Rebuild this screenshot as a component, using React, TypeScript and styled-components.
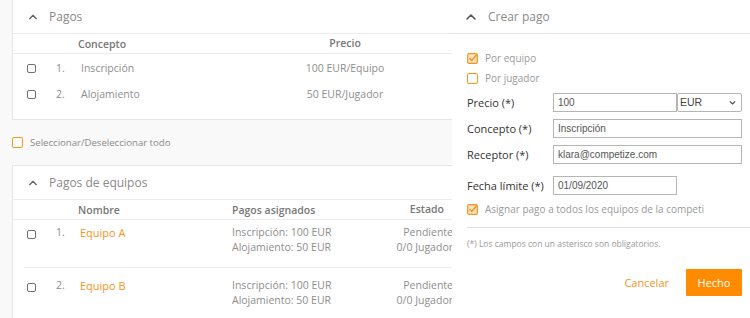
import styled, { createGlobalStyle } from 'styled-components';

const ORANGE = '#f7941d';

const GlobalStyle = createGlobalStyle`
  html, body {
    margin: 0;
    padding: 0;
    background: #f9f9f9;
    font-family: 'Open Sans', 'Noto Sans', sans-serif;
  }
  * { box-sizing: border-box; }
`;

const Page = styled.div`
  width: 750px;
  height: 318px;
  overflow: hidden;
  position: relative;
`;

const Main = styled.div`
  width: 560px;
  padding: 0 0 0 12px;
  display: flex;
  flex-direction: column;
`;

const Card = styled.section<{ $top?: boolean }>`
  background: #fff;
  border: 1px solid #e6e6e6;
  border-top: ${(p) => (p.$top ? 'none' : '1px solid #e6e6e6')};
`;

const CardHeader = styled.div`
  height: 34px;
  display: flex;
  align-items: center;
  gap: 11px;
  padding-left: 15px;
  border-bottom: 1px solid #ececec;
  color: #8a8a8a;
  font-size: 12px;

  svg {
    width: 10px;
    height: 10px;
    color: #666;
  }
`;

const HeadRow = styled.div<{ $cols: string }>`
  display: grid;
  grid-template-columns: ${(p) => p.$cols};
  align-items: center;
  height: 20px;
  border-bottom: 1px solid #ececec;
  color: #777;
  font-size: 10.5px;
  font-weight: 600;
`;

const Cell = styled.div<{ $align?: string }>`
  text-align: ${(p) => p.$align ?? 'left'};
  line-height: 15px;
  white-space: nowrap;
`;

const Box = styled.span<{ $orange?: boolean }>`
  display: inline-block;
  width: ${(p) => (p.$orange ? '11px' : '9px')};
  height: ${(p) => (p.$orange ? '11px' : '9px')};
  border: 1px solid ${(p) => (p.$orange ? ORANGE : '#707070')};
  border-radius: 2px;
  background: #fff;
  flex-shrink: 0;
`;

const SimpleList = styled.div`
  padding: 1px 0 12px;
`;

const PagosRow = styled.div`
  display: grid;
  grid-template-columns: 14px 9px 20px 25px 184px 160px;
  align-items: center;
  height: 26px;
  color: #8e8e8e;
  font-size: 10.5px;
`;

const SelectAll = styled.label`
  display: flex;
  align-items: center;
  gap: 7px;
  height: 45px;
  color: #8a8a8a;
  font-size: 9.6px;
`;

const TeamName = styled.span`
  color: ${ORANGE};
  font-size: 11px;
`;

const TeamRow = styled.div`
  display: grid;
  grid-template-columns: 3px 9px 20px 24px 152px 160px 61px;
  padding: 5px 0 12px;
  margin-left: 11px;
  color: #8e8e8e;
  font-size: 10.5px;
  border-bottom: 1px solid #ececec;

  & + & {
    padding-top: 10px;
  }
`;

const CheckCell = styled.div`
  padding-top: 3px;
`;

const Panel = styled.aside`
  position: absolute;
  top: 0;
  right: 0;
  width: 298px;
  height: 318px;
  background: #fff;
  display: flex;
  flex-direction: column;
`;

const PanelHeader = styled.div`
  height: 34px;
  display: flex;
  align-items: center;
  gap: 11px;
  padding-left: 13px;
  border-bottom: 1px solid #e4e4e4;
  color: #8a8a8a;
  font-size: 12px;

  svg {
    width: 12px;
    height: 12px;
    color: #555;
  }
`;

const PanelBody = styled.div`
  padding: 14px 8px 0 15px;
  display: flex;
  flex-direction: column;
`;

const CheckLine = styled.label<{ $mt?: number }>`
  display: flex;
  align-items: center;
  gap: 7px;
  height: 20px;
  margin-top: ${(p) => p.$mt ?? 0}px;
  color: #9a9a9a;
  font-size: 10px;
  white-space: nowrap;
`;

const OrangeCheck = styled.svg`
  width: 11px;
  height: 11px;
  flex-shrink: 0;
`;

const FieldRow = styled.div<{ $mt?: number }>`
  display: flex;
  align-items: center;
  height: 18px;
  margin-top: ${(p) => p.$mt ?? 8}px;
`;

const Label = styled.span`
  width: 86px;
  color: #333;
  font-size: 11px;
  white-space: nowrap;
`;

const Input = styled.div<{ $w: number }>`
  width: ${(p) => p.$w}px;
  height: 19px;
  border: 1px solid #b5b5b5;
  display: flex;
  align-items: center;
  padding-left: 4px;
  font-family: 'Liberation Sans', Arial, sans-serif;
  font-size: 10px;
  color: #555;
`;

const Select = styled.div`
  width: 65px;
  height: 19px;
  border: 1px solid #b5b5b5;
  border-radius: 2px;
  display: flex;
  align-items: center;
  justify-content: space-between;
  padding: 0 4px 0 2px;
  font-family: 'Liberation Sans', Arial, sans-serif;
  font-size: 10.5px;
  color: #444;

  svg {
    width: 9px;
    height: 9px;
  }
`;

const Divider = styled.div`
  height: 1px;
  background: #dedede;
  margin: 8px -8px 0 0;
`;

const Note = styled.div`
  margin-top: 10px;
  color: #9a9a9a;
  font-size: 8.5px;
`;

const Actions = styled.div`
  display: flex;
  justify-content: flex-end;
  align-items: center;
  gap: 17px;
  margin-top: 20px;
`;

const LinkButton = styled.button`
  border: none;
  background: none;
  color: ${ORANGE};
  font-family: inherit;
  font-size: 11px;
  padding: 0;
`;

const PrimaryButton = styled.button`
  border: none;
  background: #ff8c00;
  color: #fff;
  width: 56px;
  height: 27px;
  border-radius: 1px;
  font-family: inherit;
  font-size: 11px;
`;

const Chevron = () => (
  <svg viewBox="0 0 24 24" fill="none" stroke="currentColor" strokeWidth="3.2" strokeLinecap="round" strokeLinejoin="round">
    <path d="M4 16l8-8 8 8" />
  </svg>
);

const CheckedBox = () => (
  <OrangeCheck viewBox="0 0 12 12">
    <rect x="0.75" y="0.75" width="10.5" height="10.5" rx="1.5" fill="#fde3c4" stroke={ORANGE} strokeWidth="1.3" />
    <path d="M3 6l2.2 2.2L10.5 2" fill="none" stroke={ORANGE} strokeWidth="1.6" strokeLinecap="round" />
  </OrangeCheck>
);

const pagos = [
  { n: 1, concept: 'Inscripción', price: '100 EUR/Equipo' },
  { n: 2, concept: 'Alojamiento', price: '50 EUR/Jugador' },
];

const equipos = ['Equipo A', 'Equipo B'];

export default function App() {
  return (
    <Page>
      <GlobalStyle />
      <Main>
        <Card $top>
          <CardHeader>
            <Chevron />
            Pagos
          </CardHeader>
          <HeadRow $cols="65px 187px 160px">
            <span />
            <span>Concepto</span>
            <Cell $align="center">Precio</Cell>
          </HeadRow>
          <SimpleList>
            {pagos.map((p) => (
              <PagosRow key={p.n}>
                <span />
                <Box />
                <span />
                <Cell>{p.n}.</Cell>
                <Cell>{p.concept}</Cell>
                <Cell $align="center">{p.price}</Cell>
              </PagosRow>
            ))}
          </SimpleList>
        </Card>

        <SelectAll>
          <Box $orange />
          Seleccionar/Deseleccionar todo
        </SelectAll>

        <Card>
          <CardHeader>
            <Chevron />
            Pagos de equipos
          </CardHeader>
          <HeadRow $cols="65px 154px 159px 53px">
            <span />
            <span>Nombre</span>
            <span>Pagos asignados</span>
            <Cell $align="right">Estado</Cell>
          </HeadRow>
          {equipos.map((e, i) => (
            <TeamRow key={e}>
              <span />
              <CheckCell>
                <Box />
              </CheckCell>
              <span />
              <Cell>{i + 1}.</Cell>
              <Cell>
                <TeamName>{e}</TeamName>
              </Cell>
              <Cell>
                Inscripción: 100 EUR
                <br />
                Alojamiento: 50 EUR
              </Cell>
              <Cell $align="right">
                Pendiente
                <br />
                0/0 Jugador
              </Cell>
            </TeamRow>
          ))}
        </Card>
      </Main>

      <Panel>
        <PanelHeader>
          <Chevron />
          Crear pago
        </PanelHeader>
        <PanelBody>
          <CheckLine>
            <CheckedBox />
            Por equipo
          </CheckLine>
          <CheckLine>
            <Box $orange />
            Por jugador
          </CheckLine>
          <FieldRow $mt={5}>
            <Label>Precio (*)</Label>
            <Input $w={124}>100</Input>
            <Select>
              EUR
              <svg viewBox="0 0 24 24" fill="none" stroke="#444" strokeWidth="3">
                <path d="M5 9l7 7 7-7" />
              </svg>
            </Select>
          </FieldRow>
          <FieldRow>
            <Label>Concepto (*)</Label>
            <Input $w={189}>Inscripción</Input>
          </FieldRow>
          <FieldRow>
            <Label>Receptor (*)</Label>
            <Input $w={189}>klara@competize.com</Input>
          </FieldRow>
          <FieldRow $mt={13}>
            <Label>Fecha límite (*)</Label>
            <Input $w={124}>01/09/2020</Input>
          </FieldRow>
          <CheckLine $mt={5}>
            <CheckedBox />
            Asignar pago a todos los equipos de la competi
          </CheckLine>
          <Divider />
          <Note>(*) Los campos con un asterisco son obligatorios.</Note>
          <Actions>
            <LinkButton>Cancelar</LinkButton>
            <PrimaryButton>Hecho</PrimaryButton>
          </Actions>
        </PanelBody>
      </Panel>
    </Page>
  );
}
